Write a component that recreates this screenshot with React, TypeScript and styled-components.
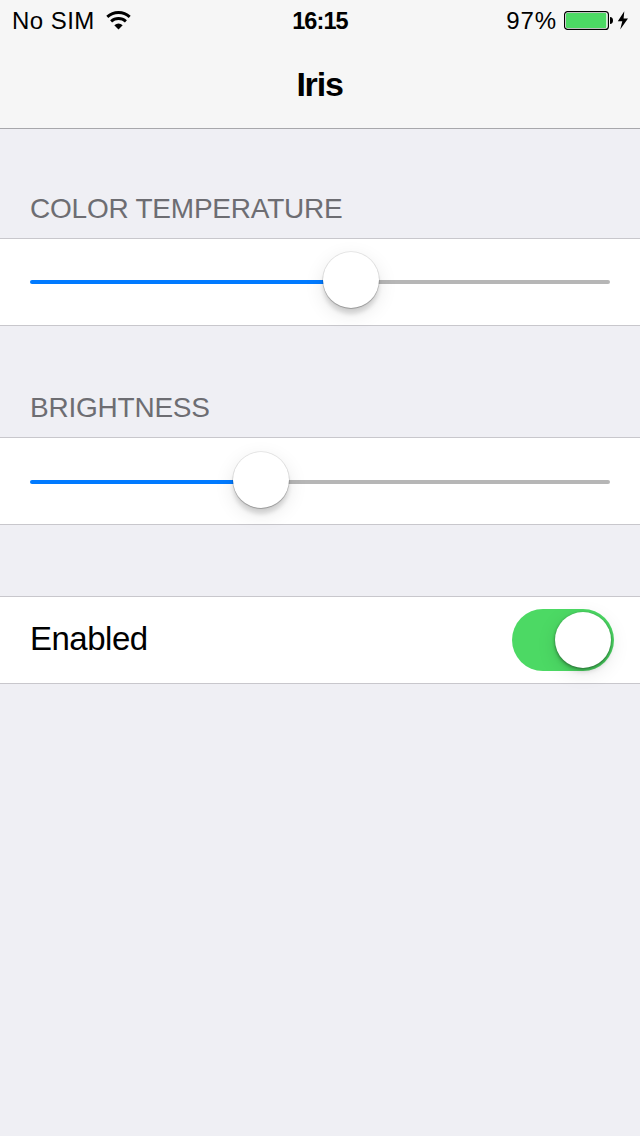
import React from 'react';
import styled, { createGlobalStyle } from 'styled-components';

const GlobalStyle = createGlobalStyle`
  * { box-sizing: border-box; }
  body {
    margin: 0;
    background: #efeff4;
    font-family: "Liberation Sans", Helvetica, Arial, sans-serif;
    color: #000;
  }
`;

const Screen = styled.main`
  display: flex;
  flex-direction: column;
  width: 640px;
  height: 1136px;
  background: #efeff4;
  overflow: hidden;
`;

const Header = styled.header`
  height: 129px;
  background: #f6f6f6;
  border-bottom: 1px solid #a7a7ab;
`;

const StatusBar = styled.div`
  display: grid;
  grid-template-columns: 1fr auto 1fr;
  align-items: center;
  height: 40px;
  padding: 1px 11px 0 12px;
  font-size: 24px;
  line-height: 28px;
`;

const Cluster = styled.div<{ $end?: boolean }>`
  display: flex;
  align-items: center;
  justify-content: ${(p) => (p.$end ? 'flex-end' : 'flex-start')};
`;

const Carrier = styled.span`
  letter-spacing: 0.45px;
  margin-right: 11px;
`;

const Clock = styled.time`
  font-weight: 700;
  font-size: 23.5px;
  letter-spacing: -0.9px;
  margin-right: 1px;
`;

const Percent = styled.span`
  letter-spacing: 0.9px;
  margin-right: 7px;
`;

const Title = styled.h1`
  margin: 0;
  padding-top: 24px;
  font-size: 34px;
  line-height: 40px;
  font-weight: 700;
  letter-spacing: -1.2px;
  text-indent: -1px;
  text-align: center;
`;

const Section = styled.section<{ $gap: number }>`
  padding-top: ${(p) => p.$gap}px;
`;

const SectionLabel = styled.h2`
  margin: 0;
  padding: 0 30px 13px;
  font-size: 28px;
  line-height: 32px;
  font-weight: 400;
  letter-spacing: -0.23px;
  color: #6d6d72;
`;

const Row = styled.div<{ $drop?: number }>`
  display: flex;
  align-items: center;
  justify-content: space-between;
  height: 88px;
  padding: ${(p) => p.$drop ?? 0}px 26px 0 30px;
  background: #fff;
  border: solid #c8c7cc;
  border-width: 1px 0;
`;

const Track = styled.div<{ $fill: number }>`
  position: relative;
  width: 580px;
  height: 4px;
  border-radius: 2px;
  background: linear-gradient(to right, #007aff ${(p) => p.$fill}px, #b6b6b6 ${(p) => p.$fill}px);
`;

const SliderThumb = styled.span<{ $at: number }>`
  position: absolute;
  left: ${(p) => p.$at - 28}px;
  top: -28px;
  width: 56px;
  height: 56px;
  border-radius: 50%;
  background: #fff;
  box-shadow: 0 0 0 0.75px rgba(0, 0, 0, 0.1), 0 1px 1px rgba(0, 0, 0, 0.2),
    0 6px 4px rgba(0, 0, 0, 0.13), 0 6px 20px rgba(0, 0, 0, 0.1);
`;

const RowText = styled.span`
  padding-bottom: 2px;
  font-size: 33px;
  line-height: 40px;
  letter-spacing: -0.5px;
`;

const Switch = styled.div`
  display: flex;
  justify-content: flex-end;
  width: 102px;
  height: 62px;
  padding: 3px;
  border-radius: 31px;
  background: #4cd964;
`;

const SwitchThumb = styled.span`
  width: 56px;
  height: 56px;
  border-radius: 50%;
  background: #fff;
  box-shadow: 0 1px 3px rgba(0, 0, 0, 0.42), 0 4px 5px rgba(0, 0, 0, 0.12),
    0 5px 20px rgba(0, 0, 0, 0.1);
`;

const WifiIcon = () => (
  <svg width="26" height="20" viewBox="0 0 26 20" aria-hidden="true">
    <g fill="none" stroke="#000" strokeWidth="2.9">
      <path d="M1.3 5.9 A16.5 16.5 0 0 1 23.7 5.9" />
      <path d="M5.1 10.4 A11 11 0 0 1 19.9 10.4" />
    </g>
    <path d="M8.3 14.3 Q12.5 10.9 16.7 14.3 L12.5 18.6 Z" />
  </svg>
);

const BatteryIcon = () => (
  <svg width="65" height="20" viewBox="0 0 65 20" aria-hidden="true">
    <rect x="0.6" y="0.6" width="43.8" height="17.8" rx="3" fill="#fff" stroke="#000" strokeWidth="1.2" />
    <rect x="2" y="2" width="40.3" height="15" rx="1" fill="#4cd964" />
    <path d="M46 6 Q49 6.3 49 9.5 Q49 12.7 46 13 Z" />
    <path d="M60.3 0.2 L53.8 10.2 L58.3 10.2 L56.2 18.6 L64 7.6 L59.6 7.6 Z" />
  </svg>
);

type SliderProps = { value: number; drop: number; label: string };

const Slider = ({ value, drop, label }: SliderProps) => (
  <Row $drop={drop}>
    <Track $fill={value} role="slider" aria-label={label} aria-valuenow={value} aria-valuemin={0} aria-valuemax={580}>
      <SliderThumb $at={value} />
    </Track>
  </Row>
);

export default function App() {
  return (
    <>
      <GlobalStyle />
      <Screen>
        <Header>
          <StatusBar>
            <Cluster>
              <Carrier>No SIM</Carrier>
              <WifiIcon />
            </Cluster>
            <Clock>16:15</Clock>
            <Cluster $end>
              <Percent>97%</Percent>
              <BatteryIcon />
            </Cluster>
          </StatusBar>
          <Title>Iris</Title>
        </Header>
        <Section $gap={64}>
          <SectionLabel>COLOR TEMPERATURE</SectionLabel>
          <Slider value={321} drop={0} label="Color temperature" />
        </Section>
        <Section $gap={66}>
          <SectionLabel>BRIGHTNESS</SectionLabel>
          <Slider value={231} drop={2} label="Brightness" />
        </Section>
        <Section $gap={71}>
          <Row>
            <RowText>Enabled</RowText>
            <Switch role="switch" aria-checked="true" aria-label="Enabled">
              <SwitchThumb />
            </Switch>
          </Row>
        </Section>
      </Screen>
    </>
  );
}
